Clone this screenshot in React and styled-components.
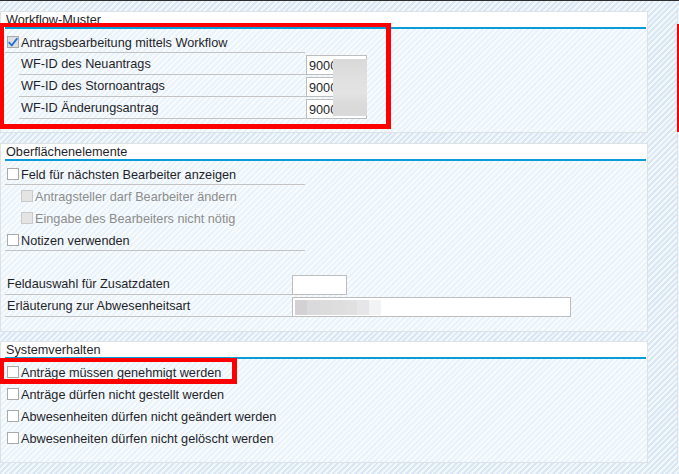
import React from "react";
import styled, { createGlobalStyle } from "styled-components";

const GlobalStyle = createGlobalStyle`
  html, body { margin: 0; padding: 0; }
  body {
    width: 679px;
    height: 474px;
    overflow: hidden;
    font-family: "Liberation Sans", Arial, sans-serif;
    font-size: 12.7px;
    color: #1f1f2a;
    background: repeating-linear-gradient(-45deg, #d8e7f3 0px, #d8e7f3 2px, #f2f7fb 2px, #f2f7fb 4px);
  }
`;

const TopLine = styled.div`
  height: 1px;
  background: #2e2e2e;
`;

const Page = styled.div`
  display: flex;
  padding-top: 10px;
  height: 463px;
  box-sizing: border-box;
`;

const Main = styled.div`
  width: 648px;
  display: flex;
  flex-direction: column;
  gap: 9px;
`;

const Side = styled.div`
  margin-left: 29px;
  flex: 1;
  position: relative;
  border-left: 1px solid #dde3e8;
  background: repeating-linear-gradient(-45deg, #eaf3f9 0px, #eaf3f9 2px, #f8fbfd 2px, #f8fbfd 4px);
`;

const SideMark = styled.div`
  position: absolute;
  left: -1px;
  top: 13px;
  width: 3px;
  height: 108px;
  background: #ff0000;
`;

const Panel = styled.section`
  position: relative;
  border: 1px solid #dde2e6;
  background: repeating-linear-gradient(-45deg, #eaf3f9 0px, #eaf3f9 2px, #f8fbfd 2px, #f8fbfd 4px);
  margin-bottom: ${(p) => p.$mb || 0}px;
`;

const Header = styled.div`
  background: #fff;
  padding: 0 1px 0 4px;
`;

const Title = styled.div`
  height: 15px;
  line-height: 17px;
  padding-left: 1px;
  border-bottom: 2px solid #0a9bd9;
  white-space: nowrap;
`;

const Body = styled.div`
  padding: 2px 0 ${(p) => p.$pb || 13}px 4px;
  display: flex;
  flex-direction: column;
`;

const CheckRow = styled.div`
  display: flex;
  align-items: center;
  width: ${(p) => (p.$indent ? 286 : 300)}px;
  height: 22px;
  box-sizing: border-box;
  padding-left: ${(p) => (p.$indent ? 16 : 2)}px;
  border-bottom: 1px solid ${(p) => (p.$line ? "#c3c3c3" : "transparent")};
  color: ${(p) => (p.$disabled ? "#8c8c8c" : "inherit")};
  white-space: nowrap;
`;

const CheckLabel = styled.span`
  padding-top: 2px;
`;

const Box = styled.span`
  width: 12px;
  height: 12px;
  box-sizing: border-box;
  flex: none;
  margin-right: 2px;
  margin-top: 1px;
  border: 1px solid ${(p) => (p.$disabled ? "#c9c9c9" : "#a9a9a9")};
  background: ${(p) => (p.$disabled ? "#e4e4e4" : p.$checked ? "#dedede" : "#fff")};
  display: flex;
  align-items: center;
  justify-content: center;
`;

const FieldRow = styled.div`
  display: flex;
  align-items: flex-end;
  height: 22px;
  margin-left: ${(p) => p.$indent || 0}px;
`;

const FieldLabel = styled.div`
  width: ${(p) => p.$w}px;
  height: 22px;
  box-sizing: border-box;
  padding: 1px 0 0 2px;
  line-height: 21px;
  border-bottom: 1px solid #c3c3c3;
  white-space: nowrap;
`;

const Input = styled.div`
  width: ${(p) => p.$w}px;
  height: 20px;
  box-sizing: border-box;
  border: 1px solid #bdbdbd;
  background: #fff;
  padding: 1px 2px 0;
  display: flex;
  align-items: center;
  line-height: 18px;
  overflow: hidden;
  white-space: nowrap;
`;

const Redacted = styled.span`
  display: block;
  width: 86px;
  height: 15px;
  margin-top: -1px;
  background: linear-gradient(90deg, #d4d1d4 0px, #d4d1d4 12px, #dad9dc 12px, #dad9dc 25px, #dcdcdc 25px, #dcdcdc 37px, #dedede 37px, #dedede 50px, #e0e0e0 50px, #e0e0e0 62px, #e6e6e8 62px, #e6e6e8 74px, #f1f3f5 74px, #f1f3f5 86px);
`;

const Blur = styled.div`
  position: absolute;
  left: 332px;
  top: 47px;
  width: 34px;
  height: 57px;
  background: linear-gradient(180deg, #d9d9d9 0%, #e0e0e0 35%, #e3e3e3 60%, #dadada 80%, #d9d9d9 100%);
`;

const Highlight = styled.div`
  position: absolute;
  left: ${(p) => p.$x}px;
  top: ${(p) => p.$y}px;
  width: ${(p) => p.$w}px;
  height: ${(p) => p.$h}px;
  box-sizing: border-box;
  border: 4px solid #ff0000;
  border-right-width: 5px;
  border-bottom-width: 5px;
  pointer-events: none;
`;

const Spacer = styled.div`
  height: 22px;
`;

function Check({ checked, disabled }) {
  return (
    <Box $checked={checked} $disabled={disabled}>
      {checked && (
        <svg width="11" height="11" viewBox="0 0 11 11">
          <path d="M1.5 5.8 L4.2 8.6 L9.6 1.6" fill="none" stroke="#1c6fd8" strokeWidth="2" strokeLinecap="square" />
        </svg>
      )}
    </Box>
  );
}

function CheckItem({ label, checked, disabled, indent, line }) {
  return (
    <CheckRow $disabled={disabled} $indent={indent} $line={line}>
      <Check checked={checked} disabled={disabled} />
      <CheckLabel>{label}</CheckLabel>
    </CheckRow>
  );
}

export default function App() {
  return (
    <>
      <GlobalStyle />
      <TopLine />
      <Page>
        <Main>
          <Panel $mb={1}>
            <Header>
              <Title>Workflow-Muster</Title>
            </Header>
            <Body $pb={13}>
              <CheckItem label="Antragsbearbeitung mittels Workflow" checked line />
              <FieldRow $indent={14}>
                <FieldLabel $w={287}>WF-ID des Neuantrags</FieldLabel>
                <Input $w={61}>9000</Input>
              </FieldRow>
              <FieldRow $indent={14}>
                <FieldLabel $w={287}>WF-ID des Stornoantrags</FieldLabel>
                <Input $w={61}>9000</Input>
              </FieldRow>
              <FieldRow $indent={14}>
                <FieldLabel $w={287}>WF-ID Änderungsantrag</FieldLabel>
                <Input $w={61}>9000</Input>
              </FieldRow>
            </Body>
            <Blur />
            <Highlight $x={-1} $y={11} $w={391} $h={106} />
          </Panel>
          <Panel>
            <Header>
              <Title>Oberflächenelemente</Title>
            </Header>
            <Body $pb={14}>
              <CheckItem label="Feld für nächsten Bearbeiter anzeigen" line />
              <CheckItem label="Antragsteller darf Bearbeiter ändern" disabled indent />
              <CheckItem label="Eingabe des Bearbeiters nicht nötig" disabled indent />
              <CheckItem label="Notizen verwenden" line />
              <Spacer />
              <FieldRow>
                <FieldLabel $w={287}>Feldauswahl für Zusatzdaten</FieldLabel>
                <Input $w={55} />
              </FieldRow>
              <FieldRow>
                <FieldLabel $w={287}>Erläuterung zur Abwesenheitsart</FieldLabel>
                <Input $w={279}>
                  <Redacted />
                </Input>
              </FieldRow>
            </Body>
          </Panel>
          <Panel>
            <Header>
              <Title>Systemverhalten</Title>
            </Header>
            <Body $pb={13}>
              <CheckItem label="Anträge müssen genehmigt werden" />
              <CheckItem label="Anträge dürfen nicht gestellt werden" />
              <CheckItem label="Abwesenheiten dürfen nicht geändert werden" />
              <CheckItem label="Abwesenheiten dürfen nicht gelöscht werden" />
            </Body>
            <Highlight $x={-1} $y={16} $w={237} $h={26} />
          </Panel>
        </Main>
        <Side>
          <SideMark />
        </Side>
      </Page>
    </>
  );
}
